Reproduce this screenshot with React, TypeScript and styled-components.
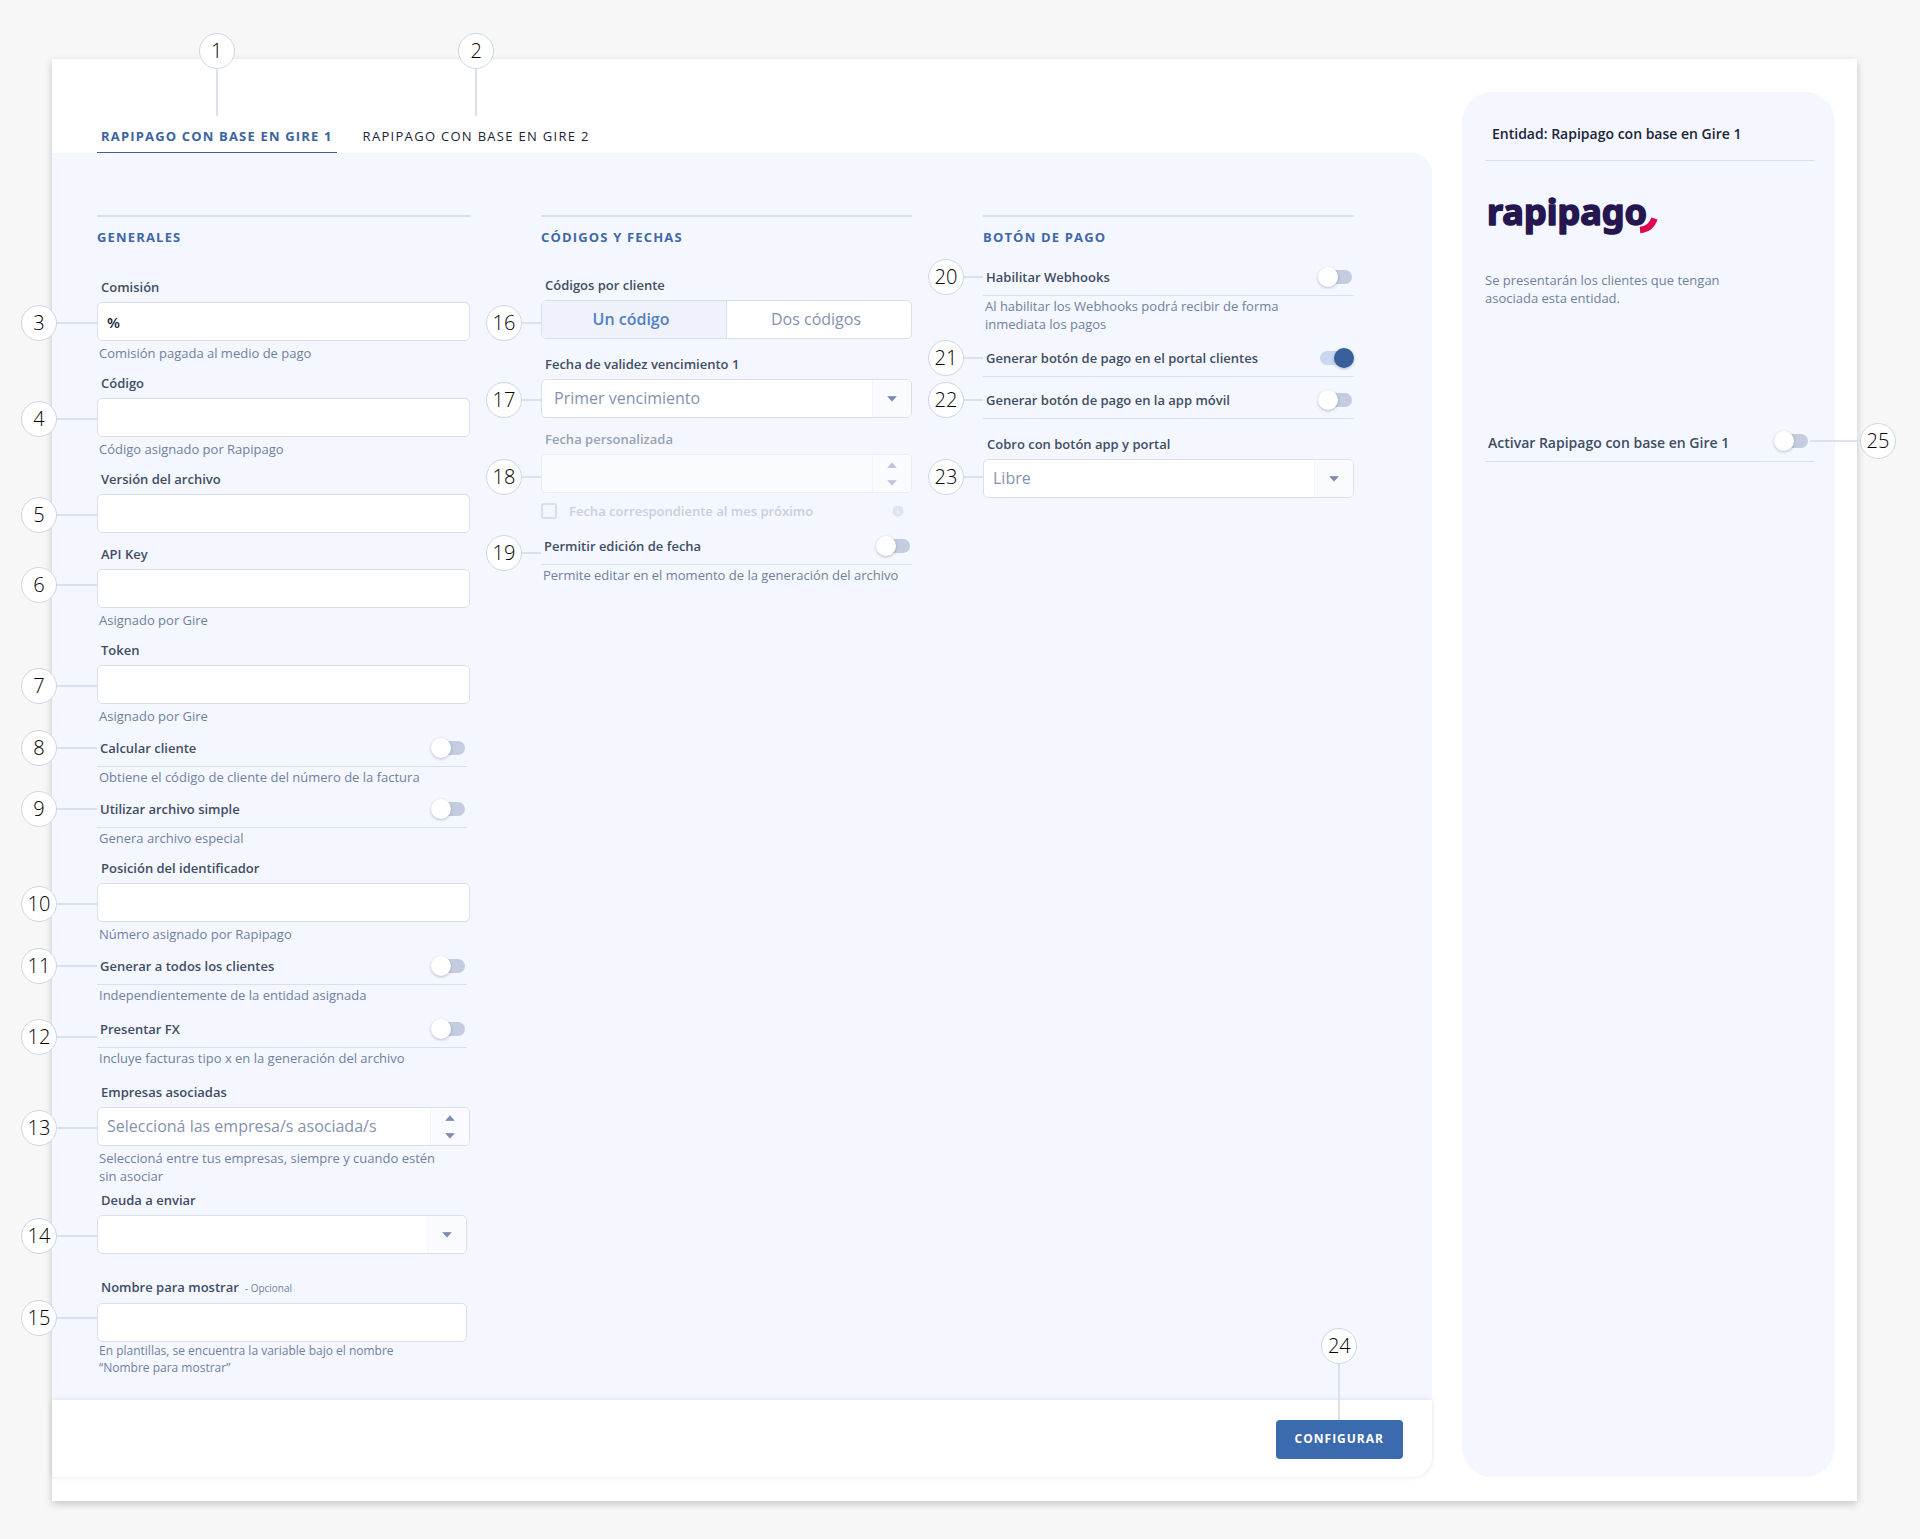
import React, { useId, useState } from "react";
import styled, { createGlobalStyle, css } from "styled-components";

const color = {
  page: "#f7f7f7",
  card: "#ffffff",
  panel: "#f4f7ff",
  line: "#dadfec",
  label: "#414d63",
  hint: "#71809c",
  heading: "#3e68a8",
  accent: "#3b6aae",
  placeholder: "#8492b0",
  ink: "#1b2438",
};

const GlobalStyle = createGlobalStyle`
  *, *::before, *::after { box-sizing: border-box; }
  body {
    margin: 0;
    background: ${color.page};
    font-family: "Open Sans", "Noto Sans", sans-serif;
    color: ${color.label};
  }
  button, input, select { font-family: inherit; }
`;

/* ---------- Page shell ---------- */

const Page = styled.div`
  padding: 59px 63px 39px 52px;
`;

const Card = styled.div`
  display: flex;
  gap: 30px;
  padding-bottom: 24px;
  background: ${color.card};
  box-shadow: 0 3px 8px rgba(0, 0, 0, 0.2);
`;

const Main = styled.main`
  flex: 1;
  min-width: 0;
  display: flex;
  flex-direction: column;
`;

const Panel = styled.div`
  display: grid;
  grid-template-columns: minmax(0, 373fr) minmax(0, 371fr) minmax(0, 371fr);
  align-items: start;
  gap: 71px;
  padding: 62px 78px 24px 45px;
  background: ${color.panel};
  border-top-right-radius: 20px;
`;

const Footer = styled.footer`
  display: flex;
  justify-content: flex-end;
  padding: 20px 29px 18px;
  background: ${color.card};
  border-bottom-right-radius: 20px;
  box-shadow: 0 0 5px rgba(0, 0, 0, 0.12);
`;

/* ---------- Numbered callouts ---------- */

const Bubble = styled.span`
  flex: none;
  display: flex;
  align-items: center;
  justify-content: center;
  width: 36px;
  height: 36px;
  border: 1px solid #cdd5e6;
  border-radius: 50%;
  background: #fff;
  color: #000;
  font-size: 20px;
  font-weight: 350;
  line-height: 24px;
`;

const Stem = styled.span<{ $length: number; $vertical?: boolean }>`
  flex: none;
  background: #dbe1ee;
  ${(p) =>
    p.$vertical
      ? css`width: 2px; height: ${p.$length}px;`
      : css`height: 2px; width: ${p.$length}px;`}
`;

const LeftCallout = styled.span<{ $y: number }>`
  position: absolute;
  right: 100%;
  top: ${(p) => p.$y - 18}px;
  display: flex;
  align-items: center;
`;

const RightCallout = styled.span`
  position: absolute;
  left: 100%;
  top: -8px;
  display: flex;
  align-items: center;
`;

const TopCallout = styled.span<{ $gap: number }>`
  position: absolute;
  left: 50%;
  bottom: calc(100% + ${(p) => p.$gap}px);
  transform: translateX(-50%);
  display: flex;
  flex-direction: column;
  align-items: center;
`;

interface MarkProps {
  n: number;
  y: number;
  stem?: number;
}

const Mark = ({ n, y, stem = 19 }: MarkProps) => (
  <LeftCallout $y={y}>
    <Bubble>{n}</Bubble>
    <Stem $length={stem} />
  </LeftCallout>
);

/* ---------- Tabs ---------- */

const Tabs = styled.div`
  display: flex;
  gap: 22px;
  padding: 68px 45px 0;
`;

const TabItem = styled.div`
  position: relative;
`;

const Tab = styled.button<{ $active: boolean }>`
  display: block;
  padding: 0 4px 7px;
  border: 0;
  border-bottom: 1px solid ${(p) => (p.$active ? "#3f6096" : "transparent")};
  background: none;
  color: ${(p) => (p.$active ? "#3b639f" : color.ink)};
  font-size: 13px;
  font-weight: ${(p) => (p.$active ? 700 : 400)};
  letter-spacing: ${(p) => (p.$active ? "0.09em" : "0.1em")};
  line-height: 18px;
  text-transform: uppercase;
  cursor: pointer;
`;

/* ---------- Form parts ---------- */

const Section = styled.section`
  display: flex;
  flex-direction: column;
  border-top: 2px solid ${color.line};
  padding-top: 11px;
`;

const SectionTitle = styled.h2<{ $after: number }>`
  margin: 0 0 ${(p) => p.$after}px;
  color: ${color.heading};
  font-size: 13px;
  font-weight: 700;
  letter-spacing: 0.09em;
  line-height: 18px;
  text-transform: uppercase;
`;

const Item = styled.div<{ $after?: number; $inset?: boolean }>`
  position: relative;
  margin-bottom: ${(p) => p.$after ?? 0}px;
  padding-right: ${(p) => (p.$inset ? 3 : 0)}px;
`;

const FieldLabel = styled.label<{ $faded?: boolean }>`
  display: block;
  margin-bottom: 6px;
  padding-left: 4px;
  color: ${(p) => (p.$faded ? "#99a1b2" : color.label)};
  font-size: 13px;
  font-weight: 600;
  line-height: 18px;
`;

const Optional = styled.small`
  margin-left: 6px;
  color: ${color.hint};
  font-size: 10px;
  font-weight: 400;
`;

const Hint = styled.p<{ $small?: boolean; $space: number }>`
  margin: ${(p) => p.$space}px 0 0;
  padding-left: 2px;
  color: ${color.hint};
  font-size: ${(p) => (p.$small ? 12 : 13)}px;
  line-height: ${(p) => (p.$small ? 17 : 18)}px;
  white-space: pre-line;
`;

const Box = styled.div<{ $faded?: boolean }>`
  display: flex;
  height: 39px;
  border: 1px solid ${(p) => (p.$faded ? "#e8ecf5" : color.line)};
  border-radius: 5px;
  background: ${(p) => (p.$faded ? "#fafbff" : "#fff")};
  overflow: hidden;
`;

const TextInput = styled.input`
  flex: 1;
  min-width: 0;
  padding: 0 9px;
  border: 0;
  outline: 0;
  background: transparent;
  color: ${color.ink};
  font-size: 15px;
  font-weight: 600;
`;

const SelectWrap = styled.div`
  flex: 1;
  min-width: 0;
  display: grid;
  grid-template-columns: minmax(0, 1fr) 39px;
  & > * { grid-row: 1; }
`;

const Select = styled.select<{ $indent: number }>`
  grid-column: 1 / -1;
  appearance: none;
  margin: 0;
  padding: 0 40px 2px ${(p) => p.$indent}px;
  border: 0;
  outline: 0;
  background: transparent;
  color: ${color.placeholder};
  font-size: 16px;
`;

const ArrowPane = styled.span`
  grid-column: 2;
  flex: none;
  width: 39px;
  display: flex;
  flex-direction: column;
  align-items: center;
  justify-content: center;
  gap: 12px;
  border-left: 1px solid #f3f5fb;
  background: #f9fbff;
  pointer-events: none;
`;

const StepButton = styled.button`
  display: flex;
  padding: 0;
  border: 0;
  background: none;
`;

const Arrow = ({ up, faded }: { up?: boolean; faded?: boolean }) => (
  <svg width="10" height="6" viewBox="0 0 10 6" display="block" aria-hidden="true">
    <path
      d={up ? "M5 .7 9.200 5.500H.8Z" : "M.8 .5H9.200L5 5.300Z"}
      fill={faded ? "#bcc5da" : "#7d8cb2"}
      stroke={faded ? "#bcc5da" : "#7d8cb2"}
      strokeWidth=".7"
      strokeLinejoin="round"
    />
  </svg>
);

/* ---------- Switch ---------- */

const SwitchInput = styled.input`
  appearance: none;
  position: relative;
  flex: none;
  width: 36px;
  height: 20px;
  margin: 0;
  cursor: pointer;

  &::before {
    content: "";
    position: absolute;
    inset: 3px 2px;
    border-radius: 7px;
    background: #c4ccdf;
  }
  &::after {
    content: "";
    position: absolute;
    top: 0;
    left: 0;
    width: 20px;
    height: 20px;
    border-radius: 50%;
    background: #fff;
    box-shadow: 0 1px 3px rgba(40, 50, 80, 0.3);
  }
  &:checked::before { background: #c9d7f0; }
  &:checked::after { left: 16px; background: #375f9a; }
`;

const SwitchRow = styled.div`
  display: flex;
  align-items: center;
  justify-content: space-between;
  height: 38px;
  border-bottom: 1px solid ${color.line};
`;

const SwitchLabel = styled.label<{ $large?: boolean }>`
  padding-left: 3px;
  font-size: ${(p) => (p.$large ? 14 : 13)}px;
  font-weight: 600;
  line-height: 18px;
`;

/* ---------- Segmented control ---------- */

const Segments = styled.fieldset`
  display: flex;
  height: 39px;
  margin: 0;
  padding: 0;
  border: 1px solid ${color.line};
  border-radius: 5px;
  background: #fff;
  overflow: hidden;
`;

const SegmentInput = styled.input`
  appearance: none;
  position: absolute;
  margin: 0;
`;

const Segment = styled.label`
  flex: 1;
  display: flex;
  align-items: center;
  justify-content: center;
  padding: 0 6px 2px 0;
  color: ${color.placeholder};
  font-size: 16px;
  cursor: pointer;

  & + & { border-left: 1px solid ${color.line}; }
  &:has(input:checked) {
    background: #eff2fa;
    color: #527fc5;
    font-weight: 600;
  }
`;

/* ---------- Checkbox ---------- */

const CheckRow = styled.div`
  display: flex;
  align-items: center;
  height: 20px;
  padding-right: 8px;
`;

const CheckInput = styled.input`
  appearance: none;
  width: 16px;
  height: 16px;
  margin: 0 12px 0 0;
  border: 2px solid #d8dfee;
  border-radius: 2px;
`;

const CheckLabel = styled.label`
  flex: 1;
  color: #c8cfdd;
  font-size: 13px;
  font-weight: 600;
  line-height: 18px;
`;

const InfoIcon = () => (
  <svg width="12" height="12" viewBox="0 0 12 12" aria-hidden="true">
    <circle cx="6" cy="6" r="5.5" fill="#dfe4f0" />
    <path d="M6 5.2V9M6 3v1.2" stroke="#f4f7ff" strokeWidth="1.4" />
  </svg>
);

/* ---------- Footer button ---------- */

const ButtonHolder = styled.div`
  position: relative;
`;

const PrimaryButton = styled.button`
  display: block;
  height: 39px;
  padding: 0 19px 2px;
  border: 0;
  border-radius: 4px;
  background: ${color.accent};
  color: #fff;
  font-size: 12px;
  font-weight: 700;
  letter-spacing: 1px;
  text-transform: uppercase;
  cursor: pointer;
`;

/* ---------- Side panel ---------- */

const Side = styled.aside`
  flex: none;
  width: 373px;
  margin: 33px 22px 0 0;
  padding: 32px 21px 24px 23px;
  border-radius: 30px;
  background: ${color.panel};
`;

const SideTitle = styled.h1`
  margin: 0;
  padding: 0 7px 16px;
  border-bottom: 1px solid ${color.line};
  color: ${color.ink};
  font-size: 14px;
  font-weight: 600;
  line-height: 20px;
`;

const LogoBox = styled.div`
  padding: 23px 0 31px;
`;

const SideText = styled.p`
  max-width: 260px;
  margin: 0 0 117px;
  color: ${color.hint};
  font-size: 13px;
  line-height: 18px;
`;

const SwitchAnchor = styled.span`
  position: relative;
  display: flex;
  margin: 0 4px 4px 0;
`;

const Logo = () => (
  <svg width="200" height="56" viewBox="0 0 200 56" display="block" role="img" aria-label="rapipago">
    <g fill="#26164f" stroke="#26164f" strokeWidth="1.6" strokeLinejoin="round">
      <text x="2" y="41" fontFamily="'Noto Sans', 'Open Sans', sans-serif" fontWeight="700" fontSize="36">
        rapipago
      </text>
    </g>
    <path d="M155 46Q166 45 169.500 34.500" fill="none" stroke="#f4f7ff" strokeWidth="9" />
    <path d="M155 46Q166 45 169.500 34.500" fill="none" stroke="#e0054f" strokeWidth="6.400" />
  </svg>
);

/* ---------- Composed fields ---------- */

interface BaseProps {
  n?: number;
  label: string;
  hint?: string;
  after?: number;
  y?: number;
  stem?: number;
  inset?: boolean;
}

const TextField = ({
  n, label, hint, after, y = 45, stem, inset, value = "", optional, smallHint,
}: BaseProps & { value?: string; optional?: boolean; smallHint?: boolean }) => {
  const id = useId();
  return (
    <Item $after={after} $inset={inset}>
      <FieldLabel htmlFor={id}>
        {label}
        {optional && <Optional>- Opcional</Optional>}
      </FieldLabel>
      <Box>
        <TextInput id={id} type="text" defaultValue={value} />
      </Box>
      {hint && <Hint $small={smallHint} $space={smallHint ? 0 : 3}>{hint}</Hint>}
      {n && <Mark n={n} y={y} stem={stem} />}
    </Item>
  );
};

const SelectField = ({
  n, label, hint, after, y = 45, stem, inset, value = "", stepper, indent = 9,
}: BaseProps & { value?: string; stepper?: boolean; indent?: number }) => {
  const id = useId();
  return (
    <Item $after={after} $inset={inset}>
      <FieldLabel htmlFor={id}>{label}</FieldLabel>
      <Box>
        <SelectWrap>
          <ArrowPane>
            {stepper && <Arrow up />}
            <Arrow />
          </ArrowPane>
          <Select id={id} $indent={indent}>
            <option>{value}</option>
          </Select>
        </SelectWrap>
      </Box>
      {hint && <Hint $space={3}>{hint}</Hint>}
      {n && <Mark n={n} y={y} stem={stem} />}
    </Item>
  );
};

const SwitchField = ({
  n, label, hint, after, y = 19, stem, inset, on = false,
}: BaseProps & { on?: boolean }) => {
  const id = useId();
  return (
    <Item $after={after} $inset={inset}>
      <SwitchRow>
        <SwitchLabel htmlFor={id}>{label}</SwitchLabel>
        <SwitchInput id={id} type="checkbox" role="switch" defaultChecked={on} />
      </SwitchRow>
      {hint && <Hint $space={1}>{hint}</Hint>}
      {n && <Mark n={n} y={y} stem={stem} />}
    </Item>
  );
};

const tabs = ["Rapipago con base en Gire 1", "Rapipago con base en Gire 2"];

export default function App() {
  const [active, setActive] = useState(0);

  return (
    <>
      <GlobalStyle />
      <Page>
        <Card>
          <Main>
            <Tabs role="tablist">
              {tabs.map((name, i) => (
                <TabItem key={name}>
                  <Tab role="tab" aria-selected={active === i} $active={active === i} onClick={() => setActive(i)}>
                    {name}
                  </Tab>
                  <TopCallout $gap={11}>
                    <Bubble>{i + 1}</Bubble>
                    <Stem $vertical $length={47} />
                  </TopCallout>
                </TabItem>
              ))}
            </Tabs>

            <Panel>
              <Section>
                <SectionTitle $after={32}>Generales</SectionTitle>
                <TextField n={3} stem={40} label="Comisión" value="%" hint="Comisión pagada al medio de pago" after={12} />
                <TextField n={4} stem={40} label="Código" hint="Código asignado por Rapipago" after={12} />
                <TextField n={5} stem={40} label="Versión del archivo" after={12} />
                <TextField n={6} stem={40} y={40} label="API Key" hint="Asignado por Gire" after={12} />
                <TextField n={7} stem={40} label="Token" hint="Asignado por Gire" after={4} />
                <SwitchField n={8} stem={40} inset label="Calcular cliente" hint="Obtiene el código de cliente del número de la factura" after={4} />
                <SwitchField n={9} stem={40} inset label="Utilizar archivo simple" hint="Genera archivo especial" after={12} />
                <TextField n={10} stem={40} label="Posición del identificador" hint="Número asignado por Rapipago" after={4} />
                <SwitchField n={11} stem={40} inset label="Generar a todos los clientes" hint="Independientemente de la entidad asignada" after={6} />
                <SwitchField n={12} stem={40} y={27} inset label="Presentar FX" hint="Incluye facturas tipo x en la generación del archivo" after={16} />
                <SelectField
                  n={13}
                  stem={40}
                  stepper
                  label="Empresas asociadas"
                  value="Seleccioná las empresa/s asociada/s"
                  hint={"Seleccioná entre tus empresas, siempre y cuando estén\nsin asociar"}
                  after={6}
                />
                <SelectField n={14} stem={40} inset label="Deuda a enviar" after={24} />
                <TextField
                  n={15}
                  stem={40}
                  y={40}
                  inset
                  optional
                  smallHint
                  label="Nombre para mostrar"
                  hint={"En plantillas, se encuentra la variable bajo el nombre\n“Nombre para mostrar”"}
                />
              </Section>

              <Section>
                <SectionTitle $after={30}>Códigos y fechas</SectionTitle>
                <Item $after={16}>
                  <FieldLabel as="div" id="codes">Códigos por cliente</FieldLabel>
                  <Segments aria-labelledby="codes">
                    <Segment>
                      <SegmentInput type="radio" name="codes" defaultChecked />
                      Un código
                    </Segment>
                    <Segment>
                      <SegmentInput type="radio" name="codes" />
                      Dos códigos
                    </Segment>
                  </Segments>
                  <Mark n={16} y={47} />
                </Item>
                <SelectField n={17} indent={12} label="Fecha de validez vencimiento 1" value="Primer vencimiento" after={12} />
                <Item $after={8}>
                  <FieldLabel $faded htmlFor="custom-date">Fecha personalizada</FieldLabel>
                  <Box $faded>
                    <TextInput id="custom-date" type="text" disabled />
                    <ArrowPane>
                      <StepButton type="button" aria-label="Aumentar" disabled><Arrow up faded /></StepButton>
                      <StepButton type="button" aria-label="Disminuir" disabled><Arrow faded /></StepButton>
                    </ArrowPane>
                  </Box>
                  <Mark n={18} y={47} />
                </Item>
                <Item $after={6}>
                  <CheckRow>
                    <CheckInput id="next-month" type="checkbox" disabled />
                    <CheckLabel htmlFor="next-month">Fecha correspondiente al mes próximo</CheckLabel>
                    <InfoIcon />
                  </CheckRow>
                </Item>
                <SwitchField n={19} y={26} label="Permitir edición de fecha" hint="Permite editar en el momento de la generación del archivo" />
              </Section>

              <Section>
                <SectionTitle $after={12}>Botón de pago</SectionTitle>
                <SwitchField
                  n={20}
                  label="Habilitar Webhooks"
                  hint={"Al habilitar los Webhooks podrá recibir de forma\ninmediata los pagos"}
                  after={6}
                />
                <SwitchField n={21} on label="Generar botón de pago en el portal clientes" after={4} />
                <SwitchField n={22} label="Generar botón de pago en la app móvil" after={16} />
                <SelectField n={23} y={42} label="Cobro con botón app y portal" value="Libre" />
              </Section>
            </Panel>

            <Footer>
              <ButtonHolder>
                <PrimaryButton type="button">Configurar</PrimaryButton>
                <TopCallout $gap={0}>
                  <Bubble>24</Bubble>
                  <Stem $vertical $length={56} />
                </TopCallout>
              </ButtonHolder>
            </Footer>
          </Main>

          <Side>
            <SideTitle>Entidad: Rapipago con base en Gire 1</SideTitle>
            <LogoBox>
              <Logo />
            </LogoBox>
            <SideText>Se presentarán los clientes que tengan asociada esta entidad.</SideText>
            <SwitchRow>
              <SwitchLabel $large htmlFor="activate">Activar Rapipago con base en Gire 1</SwitchLabel>
              <SwitchAnchor>
                <SwitchInput id="activate" type="checkbox" role="switch" />
                <RightCallout>
                  <Stem $length={50} />
                  <Bubble>25</Bubble>
                </RightCallout>
              </SwitchAnchor>
            </SwitchRow>
          </Side>
        </Card>
      </Page>
    </>
  );
}
